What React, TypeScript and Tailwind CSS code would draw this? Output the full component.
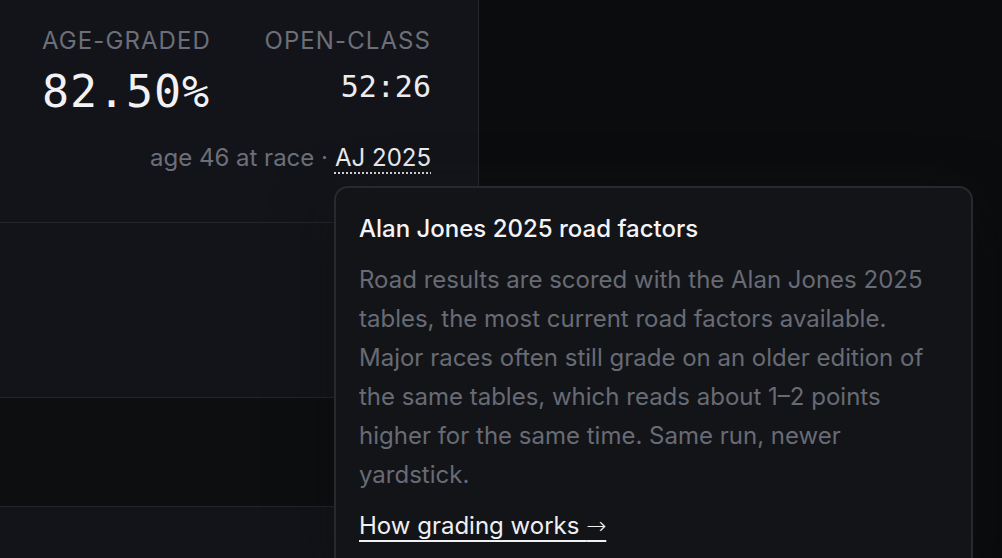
import React from 'react';

const sans = "font-['Inter','Noto_Sans',sans-serif]";
const mono = "font-['DejaVu_Sans_Mono','Liberation_Mono',monospace]";

const Stat: React.FC<{ label: string; value: string; big?: boolean; align?: 'left' | 'right' }> = ({ label, value, big, align = 'left' }) => (
    <div className={`flex flex-col ${align === 'right' ? 'items-end' : 'items-start'}`}>
        <span className="text-[24px] leading-[30px] uppercase tracking-[0.045em] text-[#6c6f79]">{label}</span>
        {big ? (
            <span className={`${mono} text-[45px] leading-none mt-[13px] mb-[3px] text-[#f2f2f4] tracking-[0.02em]`}>{value}</span>
        ) : (
            <span className={`${mono} text-[30px] leading-none mt-[16px] text-[#ececef]`}>{value}</span>
        )}
    </div>
);

export default function App() {
    return (
        <div className={`${sans} relative w-[1002px] h-[558px] overflow-hidden bg-[#0b0c0e] flex`}>

            {/* Result card */}
            <div className="w-[479px] h-full flex flex-col bg-[#131419] border-r border-[#24262b]">
                <div className="h-[223px] shrink-0 border-b border-[#24262b] pl-[42px] pr-[47px] pt-[26px] flex flex-col">
                    <div className="flex justify-between items-start">
                        <Stat label="Age-graded" value="82.50%" big />
                        <Stat label="Open-class" value="52:26" align="right" />
                    </div>
                    <div className="mt-[26px] flex justify-end items-center gap-[7px] text-[24px] leading-[30px]">
                        <span className="text-[#6c6f79]">age 46 at race ·</span>
                        <span className="text-[#ececef] underline decoration-dotted decoration-2 underline-offset-[6px] decoration-[#d8d8dc]">AJ 2025</span>
                    </div>
                </div>
                <div className="h-[175px] shrink-0 border-b border-[#24262b]" />
                <div className="h-[109px] shrink-0 border-b border-[#24262b] bg-[#0d0e10]" />
                <div className="flex-1" />
            </div>

            {/* Tooltip */}
            <div className="absolute left-[334px] top-[186px] w-[639px] h-[400px] rounded-[14px] border-2 border-[#27292e] bg-[#131418] shadow-[0_0_60px_rgba(255,255,255,0.035),0_20px_60px_rgba(0,0,0,0.5)] px-[23px] pt-[26px]">
                <div className="text-[24px] leading-[30px] font-medium text-[#f4f4f6]">Alan Jones 2025 road factors</div>
                <p className="mt-[16px] text-[24px] leading-[39px] text-[#686b75]">
                    Road results are scored with the Alan Jones 2025 tables, the most current road factors available. Major races often still grade on an older edition of the same tables, which reads about 1–2 points higher for the same time. Same run, newer yardstick.
                </p>
                <a href="#" className="inline-block mt-[17px] text-[24px] leading-[30px] text-[#f0f0f2] underline underline-offset-[6px] decoration-2">
                    How grading works <span className="font-['DejaVu_Sans',sans-serif] font-extralight">→</span>
                </a>
            </div>
        </div>
    );
}
